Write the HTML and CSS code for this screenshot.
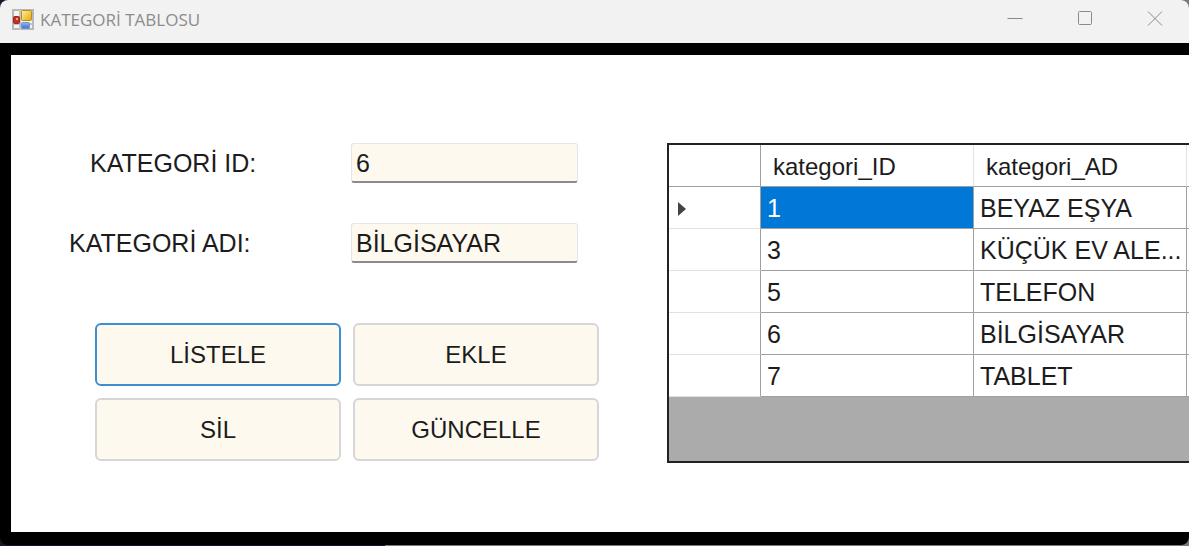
FILE: index.html
```html
<!DOCTYPE html>
<html lang="tr">
<head>
<meta charset="utf-8">
<title>KATEGORİ TABLOSU</title>
<link rel="stylesheet" href="styles.css">
</head>
<body>
<div class="window">
  <header class="titlebar">
    <svg class="app-icon" viewBox="0 0 22 22" aria-hidden="true">
      <defs>
        <linearGradient id="gold" x1="0" y1="0" x2="1" y2="1"><stop offset="0" stop-color="#fff0a0"/><stop offset="1" stop-color="#e0a80c"/></linearGradient>
        <linearGradient id="blue" x1="0" y1="0" x2="0" y2="1"><stop offset="0" stop-color="#8fb8f4"/><stop offset="1" stop-color="#3a72d0"/></linearGradient>
      </defs>
      <rect x="1" y="1" width="20" height="19" fill="#f4f4f4" stroke="#b8b8b8" stroke-width="2"/>
      <path d="M8 1v20M1 15h20" stroke="#c4c4c4" stroke-width="2"/>
      <rect x="9.500" y="1.500" width="10" height="10" rx="1" fill="url(#gold)" stroke="#bd8b12"/>
      <rect x="1.500" y="7.500" width="6" height="7" rx="1" fill="#c23222" stroke="#9c2a20"/>
      <rect x="4" y="9" width="2" height="2" fill="#f2a59c"/>
      <rect x="9.500" y="13.500" width="8" height="6" rx="1" fill="url(#blue)" stroke="#6d96d8"/>
    </svg>
    <h1 class="title">KATEGORİ TABLOSU</h1>
    <div class="window-controls">
      <button class="control" type="button" aria-label="Simge durumuna küçült"><svg viewBox="0 0 16 16"><path d="M0.500 8.500h15"/></svg></button>
      <button class="control" type="button" aria-label="Ekranı kapla"><svg viewBox="0 0 16 16"><rect x="1.500" y="1.500" width="13" height="13" rx="1"/></svg></button>
      <button class="control" type="button" aria-label="Kapat"><svg viewBox="0 0 16 16"><path d="M1 1.500l14 14M15 1.500l-14 14"/></svg></button>
    </div>
  </header>
  <main class="client">
    <form class="editor">
      <div class="field">
        <label class="label label-id" for="kategori-id">KATEGORİ ID:</label>
        <input class="textbox" id="kategori-id" type="text" value="6">
      </div>
      <div class="field">
        <label class="label label-name" for="kategori-ad">KATEGORİ ADI:</label>
        <input class="textbox" id="kategori-ad" type="text" value="BİLGİSAYAR">
      </div>
      <div class="actions">
        <button class="action action-default" type="button">LİSTELE</button>
        <button class="action" type="button">EKLE</button>
        <button class="action" type="button">SİL</button>
        <button class="action" type="button">GÜNCELLE</button>
      </div>
    </form>
    <div class="datagrid">
      <table class="table">
        <colgroup><col class="col-marker"><col class="col-data"><col class="col-data"><col></colgroup>
        <thead>
          <tr><th></th><th scope="col">kategori_ID</th><th scope="col">kategori_AD</th><th></th></tr>
        </thead>
        <tbody>
          <tr><th scope="row"><svg class="marker" viewBox="0 0 8 14" aria-label="Geçerli satır"><path d="M0 0l8 7-8 7z"/></svg></th><td class="selected">1</td><td>BEYAZ EŞYA</td><td></td></tr>
          <tr><th></th><td>3</td><td>KÜÇÜK EV ALE...</td><td></td></tr>
          <tr><th></th><td>5</td><td>TELEFON</td><td></td></tr>
          <tr><th></th><td>6</td><td>BİLGİSAYAR</td><td></td></tr>
          <tr><th></th><td>7</td><td>TABLET</td><td></td></tr>
        </tbody>
      </table>
    </div>
  </main>
</div>
</body>
</html>
```
FILE: styles.css
```css
* {
  box-sizing: border-box;
}

body {
  margin: 0;
  min-height: 100vh;
  padding-bottom: 1px;
  display: flex;
  background: linear-gradient(90deg, #17162a 385px, #77797a 385px);
  font-family: "Liberation Sans", Arial, sans-serif;
  font-size: 25px;
  color: #1c1c1c;
}

.window {
  flex: 1;
  min-width: 0;
  display: flex;
  flex-direction: column;
  background: #000;
  border-radius: 8px;
  overflow: hidden;
}

.titlebar {
  display: flex;
  align-items: center;
  height: 43px;
  padding: 0 0 4px 12px;
  background: #f2f2f2;
}

.app-icon {
  width: 22px;
  height: 22px;
}

.title {
  flex: 1;
  margin: 0 0 0 6px;
  font: 400 17px/24px "Open Sans", "Noto Sans", sans-serif;
  color: #8c8c8c;
}

.window-controls {
  display: flex;
}

.control {
  width: 70px;
  height: 39px;
  padding: 0 0 0 2px;
  border: 0;
  background: none;
}

.control svg {
  width: 16px;
  height: 16px;
  fill: none;
  stroke: #8a8a8a;
}

.client {
  flex: 1;
  display: flex;
  align-items: flex-start;
  gap: 68px;
  margin: 12px 0 13px 11px;
  padding: 88px 0 68px 58px;
  background: #fff;
}

.editor {
  flex: none;
  display: flex;
  flex-direction: column;
  gap: 40px;
}

.field {
  display: flex;
  align-items: center;
}

.label {
  width: 282px;
}

.label-id {
  padding-left: 21px;
}

.textbox {
  width: 227px;
  height: 40px;
  padding: 2px 4px 0;
  border: 1px solid #e6e6e8;
  border-bottom: 2px solid #8c8990;
  border-radius: 3px;
  background: #fef9ef;
  font: inherit;
  color: inherit;
}

.actions {
  display: grid;
  grid-template-columns: repeat(2, 246px);
  gap: 12px;
  margin: 20px 0 0 26px;
}

.action {
  height: 63px;
  padding: 0;
  border: 2px solid #d6d6d8;
  border-radius: 6px;
  background: #fef9ef;
  font: inherit;
  font-size: 24px;
  color: inherit;
}

.action-default {
  border-color: #3e8fd0;
}

.datagrid {
  flex: 1;
  min-width: 0;
  min-height: 320px;
  border: 2px solid #222;
  border-right: 0;
  background: #ababab;
  overflow: hidden;
}

.table {
  width: 100%;
  table-layout: fixed;
  border-collapse: separate;
  border-spacing: 0;
  background: #fff;
}

.col-marker {
  width: 92px;
}

.col-data {
  width: 213px;
}

.table th,
.table td {
  height: 42px;
  padding: 2px 0 0 6px;
  border-right: 1px solid #a0a0a0;
  border-bottom: 1px solid #a0a0a0;
  font-weight: 400;
  text-align: left;
  white-space: nowrap;
}

.table thead th {
  padding-left: 12px;
  font-size: 24px;
}

.table thead th:nth-child(2),
.table thead th:nth-child(3) {
  border-right-color: #e2e2e2;
}

.table tbody th {
  padding-left: 9px;
  border-bottom-color: #e2e2e2;
}

.table th:last-child,
.table td:last-child {
  padding: 0;
  border-right: 0;
}

.table .selected {
  background: #0078d7;
  color: #fff;
}

.marker {
  display: block;
  width: 8px;
  height: 14px;
  fill: #444;
}
```
